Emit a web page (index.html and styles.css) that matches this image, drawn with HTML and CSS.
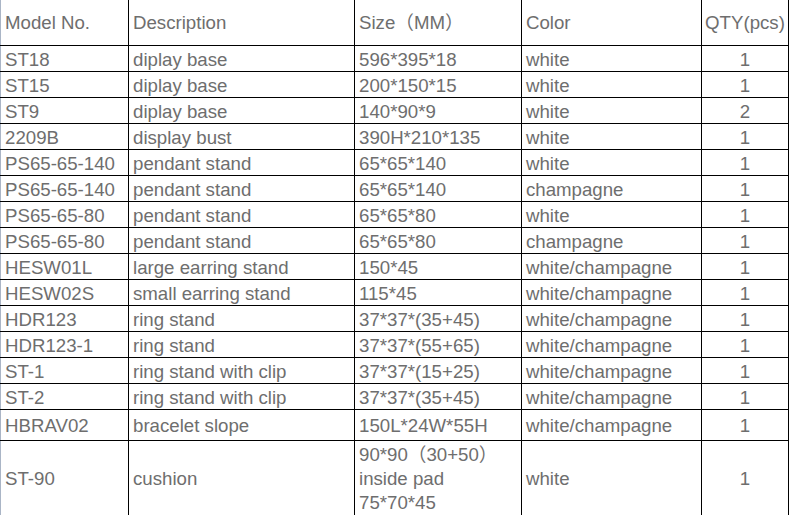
FILE: index.html
```html
<!DOCTYPE html>
<html>
<head>
<meta charset="utf-8">
<link rel="stylesheet" href="styles.css">
</head>
<body>
<table class="spec">
  <colgroup>
    <col class="c-model">
    <col class="c-desc">
    <col class="c-size">
    <col class="c-color">
    <col class="c-qty">
  </colgroup>
  <tr class="head">
    <td>Model No.</td><td>Description</td><td>Size（MM）</td><td>Color</td><td class="qty">QTY(pcs)</td>
  </tr>
  <tr><td>ST18</td><td>diplay base</td><td>596*395*18</td><td>white</td><td class="qty">1</td></tr>
  <tr><td>ST15</td><td>diplay base</td><td>200*150*15</td><td>white</td><td class="qty">1</td></tr>
  <tr><td>ST9</td><td>diplay base</td><td>140*90*9</td><td>white</td><td class="qty">2</td></tr>
  <tr><td>2209B</td><td>display bust</td><td>390H*210*135</td><td>white</td><td class="qty">1</td></tr>
  <tr><td>PS65-65-140</td><td>pendant stand</td><td>65*65*140</td><td>white</td><td class="qty">1</td></tr>
  <tr><td>PS65-65-140</td><td>pendant stand</td><td>65*65*140</td><td>champagne</td><td class="qty">1</td></tr>
  <tr><td>PS65-65-80</td><td>pendant stand</td><td>65*65*80</td><td>white</td><td class="qty">1</td></tr>
  <tr><td>PS65-65-80</td><td>pendant stand</td><td>65*65*80</td><td>champagne</td><td class="qty">1</td></tr>
  <tr><td>HESW01L</td><td>large earring stand</td><td>150*45</td><td>white/champagne</td><td class="qty">1</td></tr>
  <tr><td>HESW02S</td><td>small earring stand</td><td>115*45</td><td>white/champagne</td><td class="qty">1</td></tr>
  <tr><td>HDR123</td><td>ring stand</td><td>37*37*(35+45)</td><td>white/champagne</td><td class="qty">1</td></tr>
  <tr><td>HDR123-1</td><td>ring stand</td><td>37*37*(55+65)</td><td>white/champagne</td><td class="qty">1</td></tr>
  <tr><td>ST-1</td><td>ring stand with clip</td><td>37*37*(15+25)</td><td>white/champagne</td><td class="qty">1</td></tr>
  <tr><td>ST-2</td><td>ring stand with clip</td><td>37*37*(35+45)</td><td>white/champagne</td><td class="qty">1</td></tr>
  <tr class="tall"><td>HBRAV02</td><td>bracelet slope</td><td>150L*24W*55H</td><td>white/champagne</td><td class="qty">1</td></tr>
  <tr class="big"><td>ST-90</td><td>cushion</td><td class="multi">90*90（30+50）<br>inside pad<br>75*70*45</td><td>white</td><td class="qty">1</td></tr>
</table>
</body>
</html>
```

FILE: styles.css
```css
html, body {
  margin: 0;
  padding: 0;
  background: #ffffff;
}

.spec {
  border-collapse: collapse;
  table-layout: fixed;
  width: 789px;
  font-family: "Liberation Sans", Arial, "Noto Sans CJK SC", sans-serif;
  font-size: 18.67px;
  color: #6e6e6e;
  border-left: 1px solid #aab5c6;
}

.c-model { width: 128px; }
.c-desc { width: 226px; }
.c-size { width: 167px; }
.c-color { width: 180px; }
.c-qty { width: 87px; }

.spec td {
  border: 1px solid #000000;
  padding: 2px 3px 0 4px;
  height: 23px;
  line-height: 22px;
  vertical-align: middle;
  white-space: nowrap;
  overflow: hidden;
}

.spec td:first-child {
  border-left: 1px solid #aab5c6;
  padding-left: 4px;
}

.spec tr.head td {
  border-top: none;
  padding-top: 0;
  height: 45px;
}

.spec td.qty {
  text-align: center;
  padding-left: 0;
  padding-right: 0;
}

.spec tr.tall td { height: 28px; }
.spec tr.big td { height: 70px; }

.spec td.multi {
  line-height: 24px;
}
```
